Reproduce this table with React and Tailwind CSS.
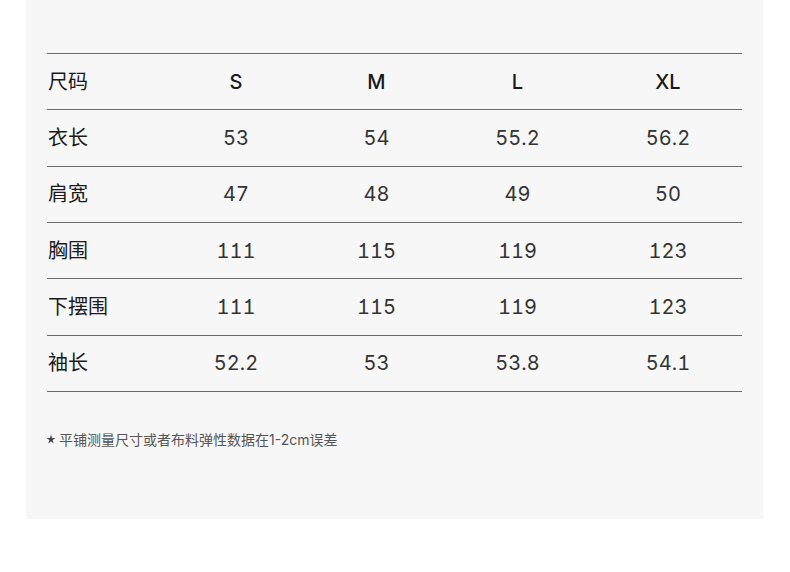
import React from 'react';

const SIZES = ['S', 'M', 'L', 'XL'];

const ROWS = [
    { label: '衣长', values: ['53', '54', '55.2', '56.2'] },
    { label: '肩宽', values: ['47', '48', '49', '50'] },
    { label: '胸围', values: ['111', '115', '119', '123'] },
    { label: '下摆围', values: ['111', '115', '119', '123'] },
    { label: '袖长', values: ['52.2', '53', '53.8', '54.1'] },
];

const font = { fontFamily: 'Inter, "Noto Sans CJK SC", sans-serif' };
const cols = 'grid grid-cols-[119px_140px_141px_141px_154px] items-center h-[56.33px] border-b border-[#6b6b6b]';

const Star = () => (
    <svg width="10" height="10" viewBox="0 0 20 20" className="mr-[3px] shrink-0">
        <polygon
            points="10,1 12,7.8 19,7.8 13.2,11.9 15.5,19 10,14.6 4.5,19 6.8,11.9 1,7.8 8,7.8"
            fill="#444"
        />
    </svg>
);

const App = () => {
    return (
        <div className="w-[790px] h-[572px] bg-white" style={font}>
            <div className="ml-[26px] w-[737px] h-[519px] bg-[#f7f7f7] px-[21px] pt-[53px]">
                <div className="border-t border-[#6b6b6b] tabular-nums [font-feature-settings:'cv01','tnum']">
                    {/* header */}
                    <div className={cols}>
                        <div className="text-[20px] text-[#1a1a1a] pl-px">尺码</div>
                        {SIZES.map((s, i) => (
                            <div key={s} className={`text-center text-[20px] font-medium text-[#1a1a1a] ${i === 3 ? 'pl-[6px]' : ''}`}>{s}</div>
                        ))}
                    </div>

                    {ROWS.map((row) => (
                        <div key={row.label} className={cols}>
                            <div className="text-[20px] text-[#1a1a1a] pl-px">{row.label}</div>
                            {row.values.map((v, i) => (
                                <div key={i} className={`text-center text-[20px] text-[#333] ${i === 3 ? 'pl-[6px]' : ''}`}>{v}</div>
                            ))}
                        </div>
                    ))}
                </div>

                <p className="mt-[37px] text-[14px] text-[#555] -ml-px flex items-center">
                    <Star />
                    平铺测量尺寸或者布料弹性数据在1-2cm误差
                </p>
            </div>
        </div>
    );
};

export default App;
